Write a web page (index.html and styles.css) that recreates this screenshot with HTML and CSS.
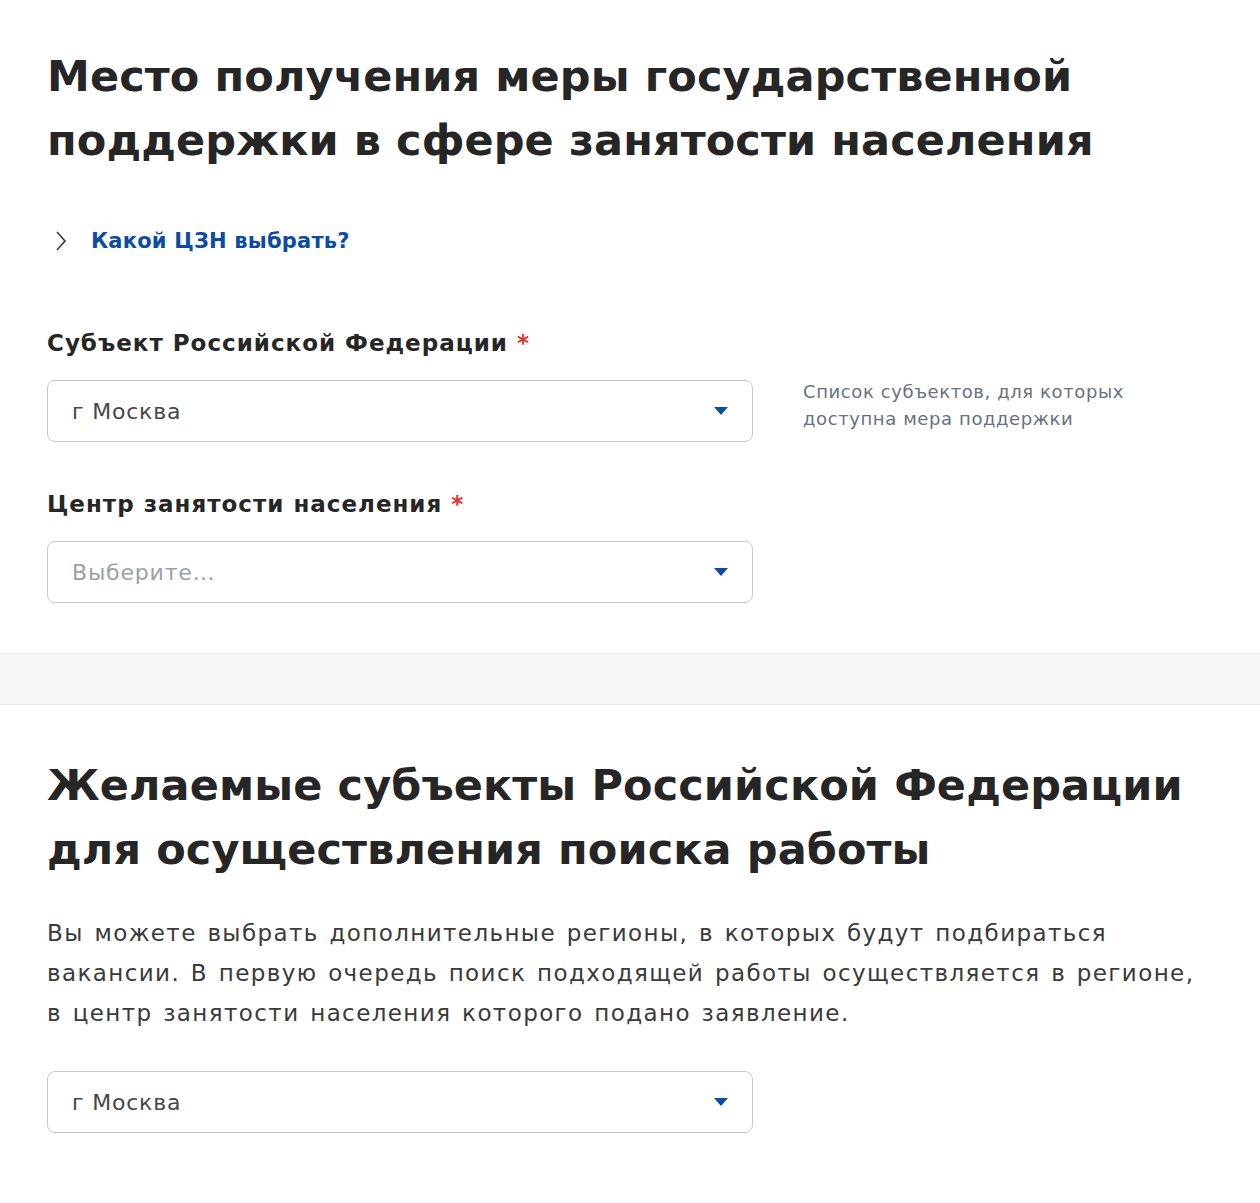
FILE: index.html
```html
<!DOCTYPE html>
<html lang="ru">
<head>
<meta charset="utf-8">
<title>Место получения меры</title>
<link rel="stylesheet" href="styles.css">
</head>
<body>
<section class="block block-top">
  <h1 class="title">Место получения меры государственной поддержки в сфере занятости населения</h1>
  <div class="accordion">
    <svg class="chev" width="14" height="22" viewBox="0 0 14 22"><path d="M3 2 L11 11 L3 20" fill="none" stroke="#3a3a3a" stroke-width="1.6"/></svg>
    <span class="link">Какой ЦЗН выбрать?</span>
  </div>
  <div class="field field-1">
    <div class="label">Субъект Российской Федерации <span class="req">*</span></div>
    <div class="row">
      <div class="select"><span class="value">г Москва</span><span class="arrow"></span></div>
      <div class="hint">Список субъектов, для которых доступна мера поддержки</div>
    </div>
  </div>
  <div class="field field-2">
    <div class="label">Центр занятости населения <span class="req">*</span></div>
    <div class="row">
      <div class="select"><span class="value placeholder">Выберите…</span><span class="arrow"></span></div>
    </div>
  </div>
</section>
<div class="divider"></div>
<section class="block block-bottom">
  <h1 class="title">Желаемые субъекты Российской Федерации для осуществления поиска работы</h1>
  <p class="text">Вы можете выбрать дополнительные регионы, в которых будут подбираться<br>вакансии. В первую очередь поиск подходящей работы осуществляется в регионе,<br>в центр занятости населения которого подано заявление.</p>
  <div class="row row-last">
    <div class="select"><span class="value">г Москва</span><span class="arrow"></span></div>
  </div>
</section>
</body>
</html>
```
FILE: styles.css
```css
html, body {
  margin: 0;
  padding: 0;
  background: #ffffff;
}
body {
  font-family: "DejaVu Sans", "Noto Sans", sans-serif;
  color: #2b2b2b;
  width: 1260px;
}
.block {
  padding: 0 47px;
}
.block-top {
  padding-top: 44px;
  padding-bottom: 50px;
}
.title {
  margin: 0;
  font-size: 43px;
  line-height: 64px;
  font-weight: 700;
  color: #262626;
  letter-spacing: 0.1px;
}
.accordion {
  display: flex;
  align-items: center;
  gap: 23px;
  margin-top: 49px;
  padding-left: 7px;
  height: 40px;
}
.chev { display: block; }
.link {
  font-size: 21px;
  font-weight: 700;
  letter-spacing: 0.2px;
  color: #0d4ca3;
}
.field-1 {
  margin-top: 66px;
}
.field-2 {
  margin-top: 46px;
}
.label {
  font-size: 23px;
  font-weight: 700;
  line-height: 32px;
  letter-spacing: 1px;
  color: #262626;
}
.req {
  color: #e7302a;
}
.row {
  display: flex;
  align-items: flex-start;
  gap: 50px;
  margin-top: 21px;
}
.select {
  box-sizing: border-box;
  width: 706px;
  height: 62px;
  border: 1px solid #c6cad0;
  border-radius: 8px;
  display: flex;
  align-items: center;
  justify-content: space-between;
  padding: 0 24px 0 24px;
  flex: none;
}
.value {
  font-size: 22px;
  letter-spacing: 0.8px;
  color: #474747;
}
.placeholder {
  color: #9ca1a8;
}
.arrow {
  width: 0;
  height: 0;
  border-left: 7px solid transparent;
  border-right: 7px solid transparent;
  border-top: 8px solid #0d4ca3;
}
.hint {
  font-size: 18px;
  line-height: 27px;
  letter-spacing: 0.6px;
  color: #66727f;
  width: 380px;
  margin-top: -2px;
}
.divider {
  height: 50px;
  background: #f8f8f8;
  border-top: 1px solid #ececec;
  border-bottom: 1px solid #ececec;
}
.block-bottom {
  padding-top: 48px;
  padding-bottom: 70px;
}
.text {
  margin: 32px 0 0;
  font-size: 23px;
  line-height: 40px;
  letter-spacing: 1.4px;
  word-spacing: 2px;
  color: #3a3a3a;
  white-space: nowrap;
}
.row-last {
  margin-top: 38px;
}
```
